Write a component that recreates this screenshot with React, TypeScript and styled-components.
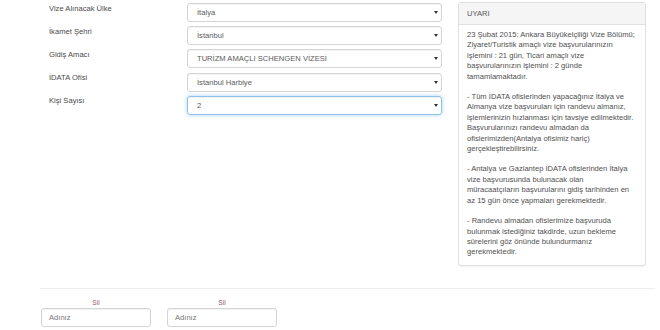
import React from "react";
import styled, { createGlobalStyle } from "styled-components";

const Global = createGlobalStyle`
  html, body { margin: 0; padding: 0; background: #fff; }
  body { font-family: "Liberation Sans", Arial, sans-serif; color: #333; }
`;

const Page = styled.div`
  width: 660px;
  height: 330px;
  overflow: hidden;
  display: flex;
  flex-direction: column;
`;

const Top = styled.div`
  display: flex;
  align-items: flex-start;
  padding: 3px 0 0 49px;
  gap: 16px;
`;

const Form = styled.div`
  display: grid;
  grid-template-columns: 138px 255px;
  row-gap: 4.2px;
`;

const Label = styled.div`
  font-size: 7.6px;
  line-height: 10px;
  color: #4a4a4a;
  margin-top: 0.5px;
`;

const SelectBox = styled.div<{ $focus?: boolean }>`
  height: 19px;
  box-sizing: border-box;
  border: 1px solid ${(p) => (p.$focus ? "#8fc2ea" : "#d4d4d4")};
  border-radius: 3px;
  box-shadow: ${(p) =>
    p.$focus
      ? "inset 0 1px 1px rgba(0,0,0,.06), 0 0 4px rgba(102,175,233,.55)"
      : "inset 0 1px 1px rgba(0,0,0,.05)"};
  display: flex;
  align-items: center;
  justify-content: space-between;
  padding: 0 3px 0 9px;
  font-size: 7.6px;
  color: #5a5a5a;
`;

const Arrow = styled.span`
  width: 0;
  height: 0;
  border-left: 2px solid transparent;
  border-right: 2px solid transparent;
  border-top: 3px solid #333;
`;

const Panel = styled.div`
  width: 188px;
  box-sizing: border-box;
  margin-top: -1px;
  border: 1px solid #e0e0e0;
  border-radius: 3px;
  box-shadow: 0 1px 1px rgba(0,0,0,.05);
  font-size: 7.6px;
  color: #505050;
`;

const PanelHead = styled.div`
  height: 22px;
  box-sizing: border-box;
  background: #f5f5f5;
  border-bottom: 1px solid #e0e0e0;
  border-radius: 3px 3px 0 0;
  padding: 0 8px;
  display: flex;
  align-items: center;
  color: #555;
`;

const PanelBody = styled.div`
  padding: 5px 8px 7px 8px;
`;

const Para = styled.p`
  margin: 0 0 10px 0;
  line-height: 10.4px;
  &:last-child { margin-bottom: 0; }
`;

const Rule = styled.div`
  margin: 22px 5px 0 40px;
  border-top: 1px solid #eeeeee;
`;

const People = styled.div`
  display: flex;
  gap: 16px;
  padding: 10px 0 0 41px;
`;

const Person = styled.div`
  display: flex;
  flex-direction: column;
  align-items: center;
  gap: 1px;
`;

const Remove = styled.span`
  font-size: 6.6px;
  line-height: 8px;
  color: #9b5a6e;
`;

const NameInput = styled.div`
  width: 110px;
  height: 19px;
  box-sizing: border-box;
  border: 1px solid #d4d4d4;
  border-radius: 3px;
  box-shadow: inset 0 1px 1px rgba(0,0,0,.05);
  display: flex;
  align-items: center;
  padding-left: 7px;
  font-size: 7.6px;
  color: #777;
`;

const fields: [string, string][] = [
  ["Vize Alınacak Ülke", "İtalya"],
  ["İkamet Şehri", "İstanbul"],
  ["Gidiş Amacı", "TURİZM AMAÇLI SCHENGEN VİZESİ"],
  ["İDATA Ofisi", "İstanbul Harbiye"],
  ["Kişi Sayısı", "2"],
];

export default function App() {
  return (
    <Page>
      <Global />
      <Top>
        <Form>
          {fields.map(([l, v], i) => (
            <React.Fragment key={l}>
              <Label>{l}</Label>
              <SelectBox $focus={i === 4}>
                <span>{v}</span>
                <Arrow />
              </SelectBox>
            </React.Fragment>
          ))}
        </Form>
        <Panel>
          <PanelHead>UYARI</PanelHead>
          <PanelBody>
            <Para>
              23 Şubat 2015: Ankara Büyükelçiliği Vize Bölümü; Ziyaret/Turistik amaçlı vize başvurularınızın işlemini : 21 gün, Ticari amaçlı vize başvurularınızın işlemini : 2 günde tamamlamaktadır.
            </Para>
            <Para>
              - Tüm İDATA ofislerinden yapacağınız İtalya ve Almanya vize başvuruları için randevu almanız, işlemlerinizin hızlanması için tavsiye edilmektedir. Başvurularınızı randevu almadan da ofislerimizden(Antalya ofisimiz hariç) gerçekleştirebilirsiniz.
            </Para>
            <Para>
              - Antalya ve Gaziantep İDATA ofislerinden İtalya vize başvurusunda bulunacak olan müracaatçıların başvurularını gidiş tarihinden en az 15 gün önce yapmaları gerekmektedir.
            </Para>
            <Para>
              - Randevu almadan ofislerimize başvuruda bulunmak istediğiniz takdirde, uzun bekleme sürelerini göz önünde bulundurmanız gerekmektedir.
            </Para>
          </PanelBody>
        </Panel>
      </Top>
      <Rule />
      <People>
        {[0, 1].map((i) => (
          <Person key={i}>
            <Remove>Sil</Remove>
            <NameInput>Adınız</NameInput>
          </Person>
        ))}
      </People>
    </Page>
  );
}
